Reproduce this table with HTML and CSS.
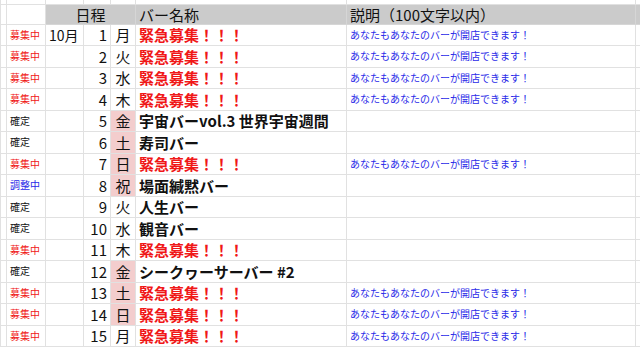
FILE: index.html
```html
<!DOCTYPE html>
<html lang="ja">
<head>
<meta charset="utf-8">
<link rel="stylesheet" href="styles.css">
</head>
<body>
<table class="sheet">
  <colgroup>
    <col class="c-gut"><col class="c-st"><col class="c-mon"><col class="c-day"><col class="c-wd"><col class="c-name"><col class="c-desc"><col class="c-end">
  </colgroup>
  <tr class="spacer"><td></td><td></td><td></td><td></td><td></td><td></td><td></td><td></td></tr>
  <tr class="head">
    <td></td><td></td>
    <td class="h" colspan="3"><span class="center">日程</span></td>
    <td class="h">バー名称</td>
    <td class="h">説明（100文字以内）</td>
    <td class="h"></td>
  </tr>
  <tr><td></td><td class="st red">募集中</td><td class="mon">10月</td><td class="day">1</td><td class="wd">月</td><td class="name red">緊急募集！！！</td><td class="desc">あなたもあなたのバーが開店できます！</td><td></td></tr>
  <tr><td></td><td class="st red">募集中</td><td></td><td class="day">2</td><td class="wd">火</td><td class="name red">緊急募集！！！</td><td class="desc">あなたもあなたのバーが開店できます！</td><td></td></tr>
  <tr><td></td><td class="st red">募集中</td><td></td><td class="day">3</td><td class="wd">水</td><td class="name red">緊急募集！！！</td><td class="desc">あなたもあなたのバーが開店できます！</td><td></td></tr>
  <tr><td></td><td class="st red">募集中</td><td></td><td class="day">4</td><td class="wd">木</td><td class="name red">緊急募集！！！</td><td class="desc">あなたもあなたのバーが開店できます！</td><td></td></tr>
  <tr><td></td><td class="st">確定</td><td></td><td class="day">5</td><td class="wd hol">金</td><td class="name">宇宙バーvol.3 世界宇宙週間</td><td class="desc"></td><td></td></tr>
  <tr><td></td><td class="st">確定</td><td></td><td class="day">6</td><td class="wd hol">土</td><td class="name">寿司バー</td><td class="desc"></td><td></td></tr>
  <tr><td></td><td class="st red">募集中</td><td></td><td class="day">7</td><td class="wd hol">日</td><td class="name red">緊急募集！！！</td><td class="desc">あなたもあなたのバーが開店できます！</td><td></td></tr>
  <tr><td></td><td class="st blue">調整中</td><td></td><td class="day">8</td><td class="wd hol">祝</td><td class="name">場面緘黙バー</td><td class="desc"></td><td></td></tr>
  <tr><td></td><td class="st">確定</td><td></td><td class="day">9</td><td class="wd">火</td><td class="name">人生バー</td><td class="desc"></td><td></td></tr>
  <tr><td></td><td class="st">確定</td><td></td><td class="day">10</td><td class="wd">水</td><td class="name">観音バー</td><td class="desc"></td><td></td></tr>
  <tr><td></td><td class="st red">募集中</td><td></td><td class="day">11</td><td class="wd">木</td><td class="name red">緊急募集！！！</td><td class="desc"></td><td></td></tr>
  <tr><td></td><td class="st">確定</td><td></td><td class="day">12</td><td class="wd hol">金</td><td class="name">シークヮーサーバー #2</td><td class="desc"></td><td></td></tr>
  <tr><td></td><td class="st red">募集中</td><td></td><td class="day">13</td><td class="wd hol">土</td><td class="name red">緊急募集！！！</td><td class="desc">あなたもあなたのバーが開店できます！</td><td></td></tr>
  <tr><td></td><td class="st red">募集中</td><td></td><td class="day">14</td><td class="wd hol">日</td><td class="name red">緊急募集！！！</td><td class="desc">あなたもあなたのバーが開店できます！</td><td></td></tr>
  <tr><td></td><td class="st red">募集中</td><td></td><td class="day">15</td><td class="wd">月</td><td class="name red">緊急募集！！！</td><td class="desc">あなたもあなたのバーが開店できます！</td><td></td></tr>
</table>
</body>
</html>
```

FILE: styles.css
```css
html, body {
  margin: 0;
  padding: 0;
  background: #ffffff;
  overflow: hidden;
}

.sheet {
  border-collapse: collapse;
  table-layout: fixed;
  width: 646px;
  font-family: "Noto Sans CJK JP", "Noto Sans", sans-serif;
  color: #111111;
}

.c-gut { width: 6px; }
.c-st { width: 39px; }
.c-mon { width: 38px; }
.c-day { width: 27px; }
.c-wd { width: 25px; }
.c-name { width: 211px; }
.c-desc { width: 289px; }
.c-end { width: 11px; }

.sheet td {
  border: 1px solid #e1e1e1;
  padding: 0;
  height: 21.5px;
  box-sizing: border-box;
  white-space: nowrap;
  overflow: hidden;
  line-height: 1;
  vertical-align: middle;
}

.sheet tr.spacer td {
  height: 4px;
  border-top: none;
}

.sheet tr.head td {
  height: 20px;
}

.sheet td.h {
  background: #cbcbcb;
  font-size: 15px;
  padding-left: 3px;
  border-color: #d6d6d6;
}

.center {
  display: block;
  text-align: center;
  padding-right: 3px;
}

.st {
  font-size: 10px;
  padding-left: 3px !important;
}

.red { color: #f01818; }
.blue { color: #2a2ae8; }

.mon {
  font-size: 14px;
  padding-left: 3px !important;
}

.day {
  font-size: 15px;
  text-align: right;
  padding-right: 3px !important;
}

.wd {
  font-size: 15px;
  text-align: center;
}

.hol { background: #f3cdcd; }

.name {
  font-size: 15px;
  font-weight: 700;
  padding-left: 3px !important;
}

.desc {
  font-size: 10px;
  color: #2a2ae8;
  padding-left: 3px !important;
}
```
